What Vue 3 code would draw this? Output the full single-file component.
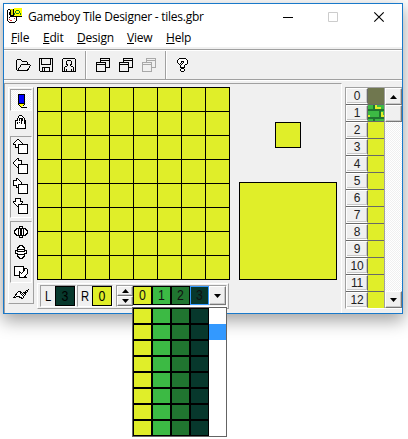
<script setup>
import { ref } from 'vue'

const palette = ['#e0ee29', '#3cba44', '#207530', '#07382c']
const selected = ref(3)
const tiles = Array.from({ length: 13 }, (_, i) => i)
const menus = ['File', 'Edit', 'Design', 'View', 'Help']
const shifts = [
  'M15.5 147.5V144.5H13.5V143.5L17.5 139.5H18.5L22.5 143.5V144.5H20.5V147.5Z',
  'M21.5 145.5H18.5V147.5H17.5L13.5 143.5V142.5L17.5 138.5H18.5V140.5H21.5Z',
  'M13.5 140.5H16.5V138.5H17.5L21.5 142.5V143.5L17.5 147.5H16.5V145.5H13.5Z',
  'M15.5 138.5H20.5V141.5H22.5V142.5L18.5 146.5H17.5L13.5 142.5V141.5H15.5Z'
]
</script>

<template>
  <div class="desktop">
    <div class="window">
      <header class="title">
        <svg class="app-icon" width="16" height="16" viewBox="7 8 16 16" shape-rendering="crispEdges">
          <path d="M8 10h8v11h-1v1h-6v-1h-1z" fill="#fff" />
          <path d="M7 10h1v11H7zM8 9h3v1H8zM8 21h1v1H8zM9 22h6v1H9zM15 21h1v1h-1zM16 17h1v4h-1zM9 12h1v3H9zM10 16h3v1h-3zM9 17h1v1H9z" fill="#000" />
          <path d="M9 19h1v1H9zM14 18h1v1h-1zM10 20h2v1h-2z" fill="#e03030" />
          <path d="M10 9h4v8h-1v-1h-3z" fill="#d8d800" />
          <path d="M10 10h1v6h-1zM11 15h2v1h-2zM13 16h9v1h-9zM13 9h1v7h-1z" fill="#000" />
          <path d="M14 8h8v8h-8z" fill="#ff0" />
          <path d="M16 10h3v1h-3zM15 11h1v2h-1zM19 11h1v2h-1zM14 13h1v2h-1zM20 13h1v2h-1zM16 13h3v1h-3z" fill="#168020" />
        </svg>
        <span class="caption">Gameboy Tile Designer - tiles.gbr</span>
        <svg class="controls" width="104" height="12" viewBox="282 10 104 12">
          <path d="M283 16.5h10" stroke="#000" />
          <path d="M328.5 11.5h9v9h-9z" fill="none" stroke="#ccc" />
          <path d="M374.3 11.3l9.4 9.4M383.7 11.3l-9.4 9.4" stroke="#000" stroke-width="1.15" />
        </svg>
      </header>
      <nav class="menu">
        <span v-for="m in menus" :key="m" :class="m.toLowerCase()"><u>{{ m[0] }}</u>{{ m.slice(1) }}</span>
      </nav>

      <div class="toolbar">
        <div class="tools files">
          <svg width="81" height="28" viewBox="4 51 81 28" class="line">
            <path d="M16.5 69.5V60.5L17.5 59.5H20.5L22.5 61.5H26.5L27.5 62.5V64.5M17.5 70.5L21.5 64.5H29.5L30.5 65.5L27.5 70.5ZM16.5 69.5l1 1" />
            <path d="M39.5 58.5H52.5V71.5H40.5L39.5 70.5ZM41.5 58.5V64.5H50.5V58.5M42.5 71.5V67.5H49.5V71.5M44.5 68V71" />
            <path d="M63.5 58.5H74.5L75.5 59.5V71.5H62.5V59.5ZM64.5 71.5V67.5L67.5 65.5L66.5 63.5V61.5L67.5 60.5H70.5L71.5 61.5V63.5L70.5 65.5L73.5 67.5V71.5M66.5 71.5V69M71.5 71.5V69" />
          </svg>
        </div>
        <div class="tools">
          <svg width="78" height="28" viewBox="87 51 78 28" class="line">
            <g v-for="i in 3" :key="i" :transform="`translate(${(i - 1) * 23} 0)`" :class="{ off: i === 3 }">
              <path d="M100.5 62V58.5H109.5V67.5H106M101 60.5H109M96.5 62.5H105.5V71.5H96.5ZM97 64.5H105" />
            </g>
          </svg>
        </div>
        <svg width="40" height="28" viewBox="167 51 40 28" class="line solid">
          <path d="M179.5 58.5H185.5L187.5 60.5V63.5L184.5 65.5V67.5H180.5V65.5L183.5 62.5V61.5H181.5V62.5L179.5 64.5L177.5 62.5V60.5Z" />
          <path d="M181.5 68.5H183.5L184.5 69.5V70.5L183.5 71.5H181.5L180.5 70.5V69.5Z" />
        </svg>
      </div>

      <main class="work">
        <section class="editor">
          <aside class="toolbox">
            <button class="tool pressed">
              <svg width="20" height="20" viewBox="11 90 20 20" shape-rendering="crispEdges">
                <path d="M18.5 94.5H24.5V103.5H18.5Z" fill="#00f" stroke="#000" />
                <path d="M19 104h5v1h-1v1h-1v1h-2v-1h-1z" fill="#ff0" />
                <path d="M18 104h1v1h-1zM19 105h1v1h-1zM20 106h1v1h-1zM24 104h1v1h-1zM23 105h1v1h-1zM21 107h6v1h-6z" fill="#000" />
              </svg>
            </button>
            <button class="tool bucket">
              <svg width="20" height="22" viewBox="11 111 20 22" class="line">
                <path d="M15.5 120.5H17.5V118.5L19.5 115.5H21.5L24.5 118.5V120.5H25.5V128.5H15.5ZM18 117.5L21.5 119.5V123.5M19.5 121V118.5H22.5V121M17.5 121.5V123.5M19.5 121.5V122.5M24.5 119V123.5" fill="#fff" />
              </svg>
            </button>
            <div class="group">
              <svg v-for="(d, i) in shifts" :key="i" width="20" height="20" viewBox="11 137 20 20" class="line solid">
                <path :d="d" /><path d="M18.5 144.5H27.5V153.5H18.5Z" />
              </svg>
            </div>
            <div class="group flips">
              <svg width="20" height="20" viewBox="11 222 20 20" class="line solid">
                <path d="M18.5 228.5H16.5V229.5L14.5 230.5V233.5L16.5 234.5V235.5H18.5ZM23.5 228.5H25.5V229.5L27.5 230.5V233.5L25.5 234.5V235.5H23.5Z" />
                <path d="M18.5 228.5H19.5V226.5H22.5V228.5H23.5V235.5H22.5V237.5H19.5V235.5H18.5ZM20.5 228V236M21.5 228V236" />
              </svg>
              <svg width="20" height="20" viewBox="11 242 20 20" class="line solid">
                <path d="M17.5 249.5V247.5H18.5L19.5 245.5H22.5L23.5 247.5H24.5V249.5ZM17.5 254.5V256.5H18.5L19.5 258.5H22.5L23.5 256.5H24.5V254.5Z" />
                <path d="M17.5 249.5H24.5V250.5H26.5V253.5H24.5V254.5H17.5V253.5H15.5V250.5H17.5ZM17 251.5H25" />
              </svg>
              <svg width="20" height="20" viewBox="11 262 20 20" class="line solid">
                <path d="M14.5 266.5H23.5V275.5H14.5Z" />
                <path d="M23.5 268.5H26.5L27.5 269.5V273.5L24.5 276.5L26.5 277.5H19.5V271.5L21.5 273.5L24.5 270.5Z" />
              </svg>
            </div>
            <svg width="22" height="20" viewBox="10 284 22 20" class="line solid last">
              <path d="M13.5 297.5L18.5 291.5H20.5L22.5 293.5L28.5 289.5L22.5 298.5L18.5 296.5ZM20.5 291.5V293.5L22.5 295.5L25.5 292.5" />
            </svg>
          </aside>

          <div class="center">
            <div class="grid"><i v-for="n in 64" :key="n"></i></div>
            <div class="palette-bar">
              <div class="pick"><span>L</span><b class="c3"><s>3</s></b></div>
              <div class="pick"><span>R</span><b class="c0"><s>0</s></b></div>
              <div class="colors">
                <div class="spin">
                  <button><svg width="7" height="4" viewBox="0 0 7 4"><path d="M0 4L3.5 0L7 4Z" /></svg></button>
                  <button><svg width="7" height="4" viewBox="0 0 7 4"><path d="M0 0L3.5 4L7 0Z" /></svg></button>
                </div>
                <b v-for="(c, i) in palette" :key="c" :class="['sw', 'c' + i, { sel: i === selected }]"><s>{{ i }}</s></b>
                <button class="drop"><svg width="7" height="4" viewBox="0 0 7 4"><path d="M0 0L3.5 4L7 0Z" /></svg></button>
                <div class="list">
                  <div v-for="r in 8" :key="r" class="set" :class="{ hot: r === 2 }">
                    <i v-for="(c, i) in palette" :key="c" :class="'c' + i"></i><em></em>
                  </div>
                </div>
              </div>
            </div>
          </div>

          <div class="preview">
            <div class="small"></div>
            <div class="large"></div>
          </div>
        </section>

        <section class="tiles">
          <div class="rows">
            <div v-for="t in tiles" :key="t" class="row">
              <span>{{ t }}</span>
              <i :class="{ olive: t === 0 }">
                <svg v-if="t === 1" width="16" height="16" shape-rendering="crispEdges">
                  <path d="M0 0h16v16H0z" fill="#3cba44" />
                  <path d="M0 4h16v2H0zM0 12h16v2H0zM5 0h2v5H5zM11 5h2v8h-2zM5 13h2v3H5z" fill="#207530" />
                  <path d="M7 0h2v2h4v2H7zM13 7h2v3h1v2h-3zM0 10h2v2H0z" fill="#e0ee29" />
                </svg>
              </i>
            </div>
          </div>
          <div class="scroll">
            <button><svg width="7" height="4" viewBox="0 0 7 4"><path d="M0 4L3.5 0L7 4Z" /></svg></button>
            <button class="thumb"></button>
            <span class="track"></span>
            <button><svg width="7" height="4" viewBox="0 0 7 4"><path d="M0 0L3.5 4L7 0Z" /></svg></button>
          </div>
        </section>
      </main>
    </div>
  </div>
</template>

<style>
body { background: #fff; overflow: hidden; }
</style>

<style scoped>
* { box-sizing: border-box; }
svg { display: block; flex: none; }
.desktop { width: 408px; height: 439px; padding: 3px; overflow: hidden; font-family: "Liberation Sans", sans-serif; color: #000; }
.window { width: 400px; height: 311px; border: 1px solid #1979ca; background: #f0f0f0; display: flex; flex-direction: column; box-shadow: 0 6px 16px 1px rgba(0, 0, 0, .36); }
button { margin: 0; padding: 0; border: 0; background: #f0f0f0; display: flex; align-items: center; justify-content: center; }
.title { height: 25px; background: #fff; display: flex; align-items: center; padding: 0 16px 0 3px; font: 12px "Open Sans", "Noto Sans", sans-serif; flex: none; }
.app-icon { margin-top: -1px; }
.caption { margin: -1px 0 0 5px; white-space: nowrap; flex: 1; letter-spacing: -.25px; }
.menu { height: 18px; background: #fff; display: flex; gap: 14px; padding-left: 7px; font: 12px/18px "Open Sans", "Noto Sans", sans-serif; letter-spacing: -.2px; flex: none; }
.menu span { width: 36px; }
.menu .file { width: 18px; }
.menu .edit { width: 20px; }
.menu .view, .menu .help { width: 25px; }
.menu u { text-underline-offset: 1px; }
.toolbar { height: 32px; flex: none; margin-top: 2px; border-top: 1px solid #a0a0a0; border-bottom: 1px solid #fff; box-shadow: inset 0 1px #fff, inset 0 -1px #a0a0a0; padding: 1px 0; display: flex; align-items: center; }
.tools { border-right: 1px solid #a0a0a0; box-shadow: 1px 0 #fff; height: 28px; }
.files { margin-right: 1px; }
.files + .tools { margin-right: 1px; }
.line { fill: none; stroke: #000; stroke-width: 1; shape-rendering: crispEdges; }
.solid { fill: #fff; }
.off { stroke: #a8a8a8; }

.work { flex: 1; display: flex; padding-top: 2px; }
.editor { width: 338px; border: solid #a0a0a0; border-width: 1px 0 0 1px; border-right: 1px solid #fff; padding: 3px 0 0 3px; display: flex; }
.toolbox { width: 26px; height: 217px; border: 1px solid #fff; border-right-color: #a0a0a0; border-bottom-color: #a0a0a0; padding: 1px; display: flex; flex-direction: column; }
.tool { width: 22px; height: 22px; }
.pressed, .group { border: 1px solid #a0a0a0; border-right-color: #fff; border-bottom-color: #fff; }
.pressed { background: repeating-conic-gradient(#f0f0f0 0 25%, #fff 0 50%) 0 0 / 2px 2px; }
.bucket { margin-bottom: 3px; }
.group { height: 82px; width: 22px; flex: none; }
.flips { height: 62px; margin-top: 3px; }
.last { margin-top: 1px; }
.center { margin-left: 3px; width: 193px; }
.grid { width: 193px; height: 193px; background: #000; padding: 1px; display: grid; grid-template-columns: repeat(8, 23px); grid-auto-rows: 23px; gap: 1px; }
.grid i { background: #e0ee29; }
.palette-bar { width: 192px; height: 26px; margin-top: 3px; border: 1px solid #fff; border-right-color: #a0a0a0; border-bottom-color: #a0a0a0; padding: 1px 2px; display: flex; gap: 1px; }
b { font-weight: 400; display: block; border: 1px solid #000; text-align: center; }
s { text-decoration: none; display: block; transform: scaleX(.88); }
.pick { width: 36px; height: 22px; border: 1px solid #a0a0a0; border-right-color: #fff; border-bottom-color: #fff; display: flex; font-size: 14px; line-height: 21px; }
.pick span { width: 14px; text-align: center; transform: scaleX(.8); }
.pick b { width: 20px; height: 20px; line-height: 19px; font-size: 14px; }
.c0 { background: #e0ee29; }
.c1 { background: #3cba44; }
.c2 { background: #207530; }
.c3 { background: #07382c; }
.colors { position: relative; margin-left: 2px; width: 111px; height: 22px; border: 1px solid #a0a0a0; border-right-color: #fff; border-bottom-color: #fff; display: flex; }
.spin { width: 16px; }
.spin button { width: 16px; height: 10px; }
.spin button, .drop, .scroll button { border: 1px solid #fff; border-right-color: #777; border-bottom-color: #777; box-shadow: inset -1px -1px #c8c8c8; }
.sw { width: 19px; height: 19px; line-height: 17px; font-size: 14px; flex: none; color: #111; }
.sw.sel { border-color: #3399ff; }
.drop { width: 17px; height: 19px; }
.list { position: absolute; left: 15px; top: 21px; width: 95px; height: 130px; background: #fff; border: 1px solid #646464; }
.set { height: 16px; display: flex; width: 93px; }
.set i { width: 19px; height: 16px; border: 1px solid #000; }
.set em { flex: 1; }
.hot em { background: #3399ff; }
.preview { width: 107px; padding-left: 9px; }
.small { width: 26px; height: 26px; margin: 35px 0 34px 36px; background: #e0ee29; border: 1px solid #000; }
.large { width: 98px; height: 98px; background: #e0ee29; border: 1px solid #000; }

.tiles { margin: 4px 0 0 3px; height: 222px; width: 57px; border: 1px solid #a0a0a0; border-right: 0; border-bottom-color: #fff; display: flex; }
.rows { width: 39px; border-right: 1px solid #a0a0a0; }
.row { height: 17px; display: flex; border-bottom: 1px solid #696969; }
.row:last-child { height: 16px; border: 0; }
.row span { width: 22px; height: 16px; border: 1px solid #fff; border-right: 1px solid #696969; box-shadow: inset -1px -1px #c8c8c8; font: 12px/15px "Liberation Sans", sans-serif; text-align: center; letter-spacing: -.2px; color: #222; }
.row i { width: 16px; height: 16px; background: #e0ee29; }
.row i.olive { background: #70774f; }
.scroll { width: 17px; height: 220px; display: flex; flex-direction: column; }
.scroll button { width: 17px; height: 17px; flex: none; }
.track { flex: 1; background: repeating-conic-gradient(#f0f0f0 0 25%, #fff 0 50%) 0 0 / 2px 2px; }
</style>
